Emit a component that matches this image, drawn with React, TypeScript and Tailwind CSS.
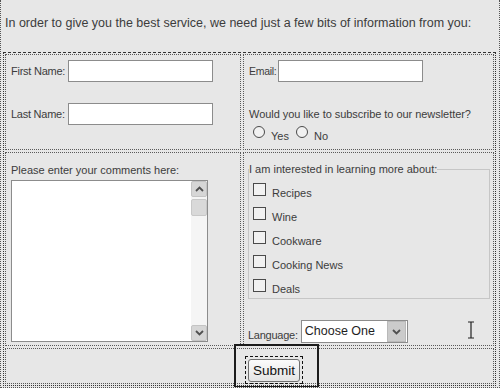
import React from 'react';

// --- helpers ---
const cell = "border border-dotted border-[#5a5a5a]";
const field = "block w-[145px] h-[22px] bg-white border border-[#8c8c8c] outline-none";

function Check({ label }: { label: string }) {
  return (
    <div className="flex items-start gap-[6px] h-[24px]">
      <div className="w-[13px] h-[13px] border border-[#4a4a4a] bg-[#f1f1f1] shrink-0" />
      <span className="mt-[4px] leading-[13px]">{label}</span>
    </div>
  );
}

function Radio({ label }: { label: string }) {
  return (
    <div className="flex items-start gap-[6px]">
      <div className="w-[12px] h-[12px] rounded-full border border-[#4a4a4a] bg-[#f1f1f1]" />
      <span className="mt-[4px] leading-[13px]">{label}</span>
    </div>
  );
}

function Chevron({ up }: { up?: boolean }) {
  return (
    <svg width="9" height="6" viewBox="0 0 9 6" className="text-[#505050]">
      <path d={up ? "M1 5 L4.5 1.5 L8 5" : "M1 1 L4.5 4.5 L8 1"} fill="none" stroke="currentColor" strokeWidth="1.8" />
    </svg>
  );
}

export default function App() {
  return (
    <div className="relative w-[500px] h-[388px] overflow-hidden bg-[#e7e7e7] border-x border-b border-dotted border-[#555] font-['Liberation_Sans',Arial,sans-serif] text-[11px] leading-[13px] text-[#3c3c3c]">
      <p className="h-[52px] pt-[16px] pl-[4px] text-[12.5px] leading-[14px]">
        In order to give you the best service, we need just a few bits of information from you:
      </p>

      <div className="ml-[2px] w-[493px] border border-dotted border-[#333] [border-top-style:dashed] p-[1px] grid grid-cols-[236px_1fr] grid-rows-[96px_194px_36px] gap-[2px]">
        {/* row 1 */}
        <div className={`${cell} pt-[5px] pl-[5px] flex flex-col gap-[21px]`}>
          <div className="flex items-center">
            <span className="w-[57px] tracking-[-0.25px]">First Name:</span>
            <input className={field} />
          </div>
          <div className="flex items-center">
            <span className="w-[57px] tracking-[-0.25px]">Last Name:</span>
            <input className={field} />
          </div>
        </div>

        <div className={`${cell} pt-[5px] pl-[5px]`}>
          <div className="flex items-center gap-[2px]">
            <span className="text-[10.5px] tracking-[-0.3px]">Email:</span>
            <input className={field} />
          </div>
          <p className="mt-[26px] tracking-[-0.05px]">Would you like to subscribe to our newsletter?</p>
          <div className="mt-[5px] ml-[4px] flex gap-[7px]">
            <Radio label="Yes" />
            <Radio label="No" />
          </div>
        </div>

        {/* row 2 */}
        <div className={`${cell} pt-[11px] pl-[5px]`}>
          <p>Please enter your comments here:</p>
          <div className="mt-[3px] w-[197px] h-[162px] bg-white border border-[#8c8c8c] flex">
            <div className="flex-1" />
            <div className="w-[16px] bg-[#f5f5f5] flex flex-col">
              <div className="h-[16px] bg-[#d6d6d6] border border-[#c4c4c4] rounded-[2px] flex items-center justify-center">
                <Chevron up />
              </div>
              <div className="mt-[2px] h-[17px] bg-[#d9d9d9] border border-[#c8c8c8] rounded-[2px]" />
              <div className="flex-1" />
              <div className="h-[16px] bg-[#d6d6d6] border border-[#c4c4c4] rounded-[2px] flex items-center justify-center">
                <Chevron />
              </div>
            </div>
          </div>
        </div>

        <div className={`${cell} pt-[10px] pl-[4px] pr-[3px]`}>
          <fieldset className="border border-[#c6c6c6] p-0 pb-[2px]">
            <legend className="p-0 ml-0">I am interested in learning more about:</legend>
            <div className="mt-[7px] ml-[4px]">
              <Check label="Recipes" />
              <Check label="Wine" />
              <Check label="Cookware" />
              <Check label="Cooking News" />
              <div className="flex items-start gap-[6px]">
                <div className="w-[13px] h-[13px] border border-[#4a4a4a] bg-[#f1f1f1]" />
                <span className="mt-[4px]">Deals</span>
              </div>
            </div>
          </fieldset>
          <div className="mt-[21px] flex items-end gap-[3px]">
            <span className="mb-[1px] tracking-[-0.25px]">Language:</span>
            <div className="w-[107px] h-[23px] bg-white border border-[#8c8c8c] flex items-center pl-[3px] pr-[1px] text-[12.5px] text-[#1e1e1e]">
              <span className="flex-1">Choose One</span>
              <div className="w-[19px] h-[21px] bg-[#cbcbcb] border border-[#b9b9b9] flex items-center justify-center">
                <Chevron />
              </div>
            </div>
          </div>
        </div>

        {/* row 3 */}
        <div className={`${cell} col-span-2 pt-[7px] pl-[239px]`}>
          <div className="w-[58px] h-[28px] border border-dashed border-[#111] flex items-center justify-center">
            <button className="w-[52px] h-[23px] rounded-[3px] border border-[#6f6f6f] bg-gradient-to-b from-[#fbfbfb] to-[#e4e4e4] text-[13.5px] text-[#111]">
              Submit
            </button>
          </div>
        </div>
      </div>

      {/* selection highlight + text cursor (overlays) */}
      <div className="absolute left-[233px] top-[344px] w-[85px] h-[44px] border-2 border-[#1b1b1b] pointer-events-none" />
      <svg className="absolute left-[465px] top-[321px]" width="10" height="18" viewBox="0 0 10 18">
        <path d="M2 1 H4 M6 1 H8 M5 1.5 V16.5 M2 17 H4 M6 17 H8 M4 1 H6 M4 17 H6" stroke="#222" strokeWidth="1.2" fill="none" />
      </svg>
    </div>
  );
}
